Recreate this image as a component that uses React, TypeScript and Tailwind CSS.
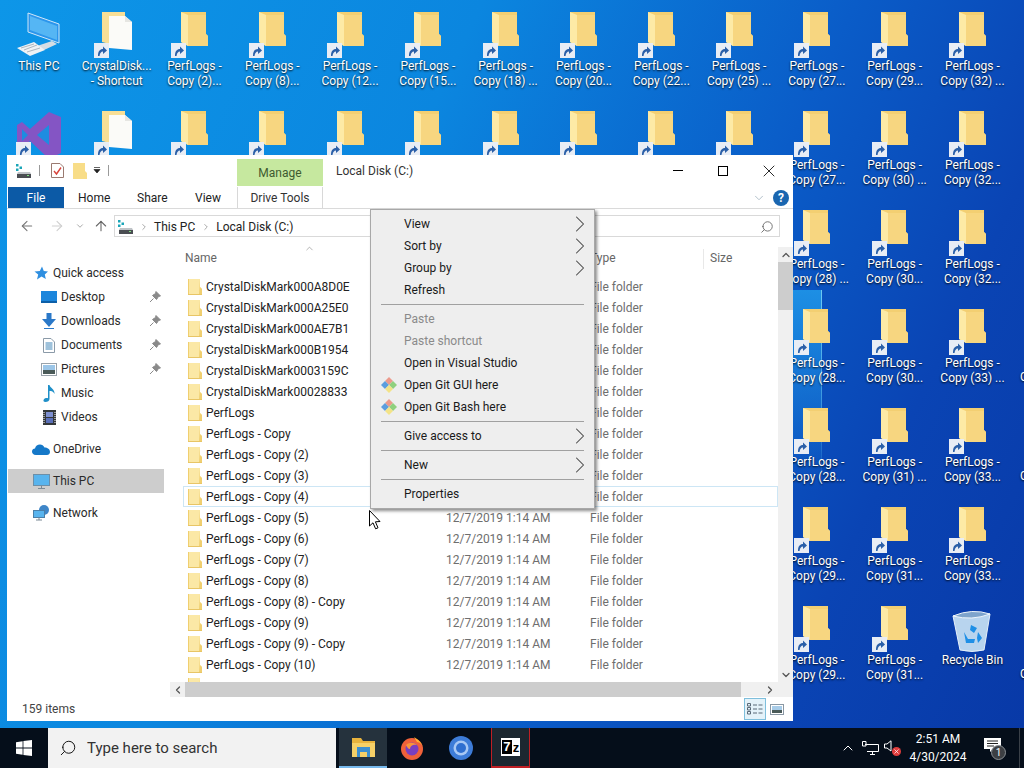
import { ChevronRight, ChevronLeft, ChevronUp, ChevronDown, ArrowLeft, ArrowRight, ArrowUp, Search, X } from "lucide-react";

const FONT = "font-['Roboto',sans-serif]";

function ShortcutBadge() {
  return (
    <svg width="15" height="15" viewBox="0 0 15 15" className="absolute left-0 bottom-0">
      <rect x="0" y="0" width="15" height="15" fill="#e8edf5" />
      <path d="M4 13 C4 8 6 6 9 6 L9 3.5 L13 7.5 L9 11 L9 8.5 C7 8.5 6 10 5.5 13 Z" fill="#2a5fa8" />
    </svg>
  );
}

function BigFolder() {
  return (
    <svg width="29" height="36" viewBox="0 0 29 36">
      <path d="M1 0 H26 V22 L28 24 V34 H8 L1 30 Z" fill="#f3cf72" />
      <path d="M1 0 L8 3 V34 L1 30 Z" fill="#fdeaa6" />
      <path d="M8 3 H26 V22 L28 24 V34 H8 Z" fill="#f7d680" />
    </svg>
  );
}

function DocFolder() {
  return (
    <svg width="32" height="40" viewBox="0 0 32 40">
      <path d="M1 0 H24 V36 L1 30 Z" fill="#f8df96" />
      <path d="M8 4 H24 L31 10 V38 L8 36 Z" fill="#fbfbf8" />
      <path d="M24 4 V10 H31 Z" fill="#e6e6e2" />
    </svg>
  );
}

function ThisPc() {
  return (
    <svg width="46" height="44" viewBox="0 0 46 44">
      <path d="M12 1 L43 12 V31 L12 20 Z" fill="#2c96ec" stroke="#cfe6f8" strokeWidth="1" />
      <path d="M14 4 L41 14 V28 L14 18 Z" fill="#55b6f4" />
      <path d="M21 34 L36 29 L41 32 L28 38 Z" fill="#d5dde4" />
      <path d="M1 36 L18 30 L29 38 L14 44 Z" fill="#eef2f5" />
      <path d="M5 36 L18 32 M8 38 L21 33 M11 40 L24 36" stroke="#aab6c0" strokeWidth="1" />
    </svg>
  );
}

function VsLogo() {
  return (
    <svg width="46" height="48" viewBox="0 0 46 48">
      <path d="M33 1 L45 6 V42 L33 48 L14 30 L6 37 L1 34 V14 L6 11 L14 18 Z" fill="#8455c4" />
      <path d="M33 14 L21 24 L33 34 Z M6 18 V30 L12 24 Z" fill="#1e8ce0" />
    </svg>
  );
}

function RecycleBin() {
  return (
    <svg width="40" height="44" viewBox="0 0 40 44">
      <path d="M1 8 L38 6 L32 42 Q20 45 8 42 Z" fill="#b8d4ee" stroke="#e6f0fa" strokeWidth="1" />
      <path d="M1 8 Q20 0 38 6 Q20 13 1 8 Z" fill="#7ea4cc" stroke="#eef5fb" strokeWidth="1" />
      <path d="M19 17 L25 20 L22 25 L18 22 Z M12 24 L16 31 L23 31 L22 35 L14 35 Z M26 24 L30 30 L26 35 L25 30 Z" fill="#1f8fe6" />
    </svg>
  );
}

type Cell = { icon: "folder" | "doc" | "pc" | "vs" | "bin"; lines: string[]; shortcut?: boolean } | null;

function f(second?: string): Cell {
  return { icon: "folder", lines: second ? ["PerfLogs -", second] : [], shortcut: true };
}

const hiddenCols: Cell[] = new Array(10).fill(null);

const desktop: Cell[] = [
  { icon: "pc", lines: ["This PC"] },
  { icon: "doc", lines: ["CrystalDisk...", "- Shortcut"], shortcut: true },
  f("Copy (2)..."), f("Copy (8)..."), f("Copy (12..."), f("Copy (15..."), f("Copy (18) ..."),
  f("Copy (20..."), f("Copy (22..."), f("Copy (25) ..."), f("Copy (27..."), f("Copy (29..."), f("Copy (32) ..."),
  { icon: "vs", lines: [], shortcut: true },
  { icon: "doc", lines: [], shortcut: true },
  f(), f(), f(), f(), f(), f(), f(), f(),
  f("Copy (27..."), f("Copy (30) ..."), f("Copy (32..."),
  ...hiddenCols, f("Copy (28) ..."), f("Copy (30..."), f("Copy (32..."),
  ...hiddenCols, f("Copy (28..."), f("Copy (30..."), f("Copy (33) ..."),
  ...hiddenCols, f("Copy (28..."), f("Copy (31) ..."), f("Copy (33..."),
  ...hiddenCols, f("Copy (29..."), f("Copy (31..."), f("Copy (33..."),
  ...hiddenCols, f("Copy (29..."), f("Copy (31..."),
  { icon: "bin", lines: ["Recycle Bin"] },
];

function DesktopIcon({ cell }: { cell: Cell }) {
  if (!cell) return <div />;
  return (
    <div className="flex flex-col items-center">
      <div className="relative flex h-[49px] w-[46px] items-start justify-center pt-[2px]">
        {cell.icon === "folder" && <BigFolder />}
        {cell.icon === "doc" && <DocFolder />}
        {cell.icon === "pc" && <ThisPc />}
        {cell.icon === "vs" && <VsLogo />}
        {cell.icon === "bin" && <div className="mt-[2px]"><RecycleBin /></div>}
        {cell.shortcut && <div className="absolute bottom-px left-0 h-[15px] w-[15px]"><ShortcutBadge /></div>}
      </div>
      <div className="w-[76px] text-center text-[12px] leading-[15px] text-white [text-shadow:0_1px_2px_rgba(0,0,0,0.95)] whitespace-nowrap">
        {cell.lines.map((l) => (
          <div key={l}>{l}</div>
        ))}
      </div>
    </div>
  );
}

function DriveIcon() {
  return (
    <svg width="16" height="14" viewBox="0 0 16 14">
      <rect x="0" y="0" width="2.5" height="2.5" fill="#1aa5b8" />
      <rect x="3.5" y="2.5" width="2.5" height="2.5" fill="#1aa5b8" />
      <rect x="0" y="4.5" width="2.5" height="2.5" fill="#1aa5b8" />
      <path d="M2 8 H14 L15 10 H1 Z" fill="#bfc3c7" />
      <rect x="1" y="10" width="14" height="4" fill="#4a4d52" />
      <rect x="11" y="11" width="2" height="1" fill="#7de07d" />
    </svg>
  );
}

function SmallFolder() {
  return (
    <svg width="14" height="16" viewBox="0 0 14 16" className="shrink-0">
      <path d="M0 0 H12 V8 L14 10 V16 H0 Z" fill="#fbe8a6" />
      <path d="M0 0 H1 V16 H0 Z M12 0 V8 L14 10 V16 H11 Z" fill="#f0cf70" />
      <path d="M0 15 H14 V16 H0 Z" fill="#e8c565" />
    </svg>
  );
}

function Pin() {
  return (
    <svg width="12" height="12" viewBox="0 0 12 12" className="absolute right-[3px]">
      <path d="M7 0.5 L11.5 5 L9.5 5.5 L7.5 8.5 L3.5 4.5 L6.5 2.5 Z M4.5 7.5 L1 11" fill="#8a8a8a" stroke="#8a8a8a" strokeWidth="1" />
    </svg>
  );
}

const navIcons: Record<string, React.ReactNode> = {
  quick: (
    <svg width="14" height="14" viewBox="0 0 14 14">
      <path d="M8 0.5 L9.8 5 L14 5.4 L10.8 8.4 L11.8 13 L7.5 10.6 L3 13.5 L4.2 8.5 L0.5 5.4 L5.8 5 Z" fill="#2f8fe0" />
    </svg>
  ),
  desktop: (
    <svg width="16" height="12" viewBox="0 0 16 12">
      <rect width="16" height="12" fill="#1c86dc" />
      <rect x="0" y="10" width="16" height="2" fill="#0c5fa8" />
    </svg>
  ),
  downloads: (
    <svg width="16" height="16" viewBox="0 0 16 16">
      <path d="M5.5 0 H10.5 V6 H15 L8 14 L1 6 H5.5 Z" fill="#2a78c8" />
      <path d="M3 15 H13 V16 H3 Z" fill="#2a78c8" />
    </svg>
  ),
  documents: (
    <svg width="12" height="15" viewBox="0 0 12 15">
      <path d="M0.5 0.5 H8 L11.5 4 V14.5 H0.5 Z" fill="#fff" stroke="#8b9aa8" />
      <path d="M2.5 5 H9.5 M2.5 7 H9.5 M2.5 9 H9.5 M2.5 11 H9.5" stroke="#3f85b8" />
    </svg>
  ),
  pictures: (
    <svg width="16" height="13" viewBox="0 0 16 13">
      <rect x="0.5" y="0.5" width="15" height="12" fill="#fff" stroke="#9aa3ab" />
      <rect x="2" y="2" width="12" height="5" fill="#9cc6e8" />
      <rect x="2" y="7" width="12" height="4" fill="#4a5a58" />
    </svg>
  ),
  music: (
    <svg width="13" height="17" viewBox="0 0 13 17">
      <path d="M5 0 H6.5 C7 3 12 4 11.5 9 C10.5 6.5 8.5 6 6.5 6 V14 C6.5 16 4.5 17 2.5 17 C0.5 17 0 15.5 0.8 14.4 C1.6 13.3 3.8 12.8 5 13.3 Z" fill="#1f8fc8" />
    </svg>
  ),
  videos: (
    <svg width="13" height="15" viewBox="0 0 13 15">
      <rect width="13" height="15" fill="#33373a" />
      <rect x="3" y="2" width="7" height="5" fill="#7d8fd0" />
      <rect x="3" y="8" width="7" height="5" fill="#5a6fb8" />
      <path d="M1 2 V13 M12 2 V13" stroke="#fff" strokeDasharray="1 1" />
    </svg>
  ),
  onedrive: (
    <svg width="18" height="11" viewBox="0 0 18 11">
      <path d="M4 11 C1 11 0 9 0 7.5 C0 5.5 1.5 4.5 3 4.5 C3.5 2 5.5 0.5 8 0.5 C10 0.5 11.5 1.5 12.5 3.5 C15.5 3.5 18 5 18 8 C18 10 16.5 11 15 11 Z" fill="#1578c8" />
    </svg>
  ),
  pc: (
    <svg width="17" height="15" viewBox="0 0 17 15">
      <rect x="0.5" y="0.5" width="16" height="11" fill="#58b4ee" stroke="#6d8fa8" />
      <path d="M5 14.5 H12 M8.5 11.5 V14.5" stroke="#7a8a96" />
    </svg>
  ),
  network: (
    <svg width="17" height="16" viewBox="0 0 17 16">
      <circle cx="11" cy="5" r="5" fill="#3f86c8" />
      <rect x="0.5" y="5.5" width="11" height="7" fill="#58b4ee" stroke="#4a7fa8" />
      <path d="M3 15 H9 M6 12.5 V15" stroke="#7a8a96" />
    </svg>
  ),
};

const navItems = [
  { key: "quick", label: "Quick access", x: "pl-[24px]", y: "mt-[18px]" },
  { key: "desktop", label: "Desktop", x: "pl-[32px]", pin: true },
  { key: "downloads", label: "Downloads", x: "pl-[32px]", pin: true },
  { key: "documents", label: "Documents", x: "pl-[32px]", pin: true },
  { key: "pictures", label: "Pictures", x: "pl-[32px]", pin: true },
  { key: "music", label: "Music", x: "pl-[32px]" },
  { key: "videos", label: "Videos", x: "pl-[32px]" },
  { key: "onedrive", label: "OneDrive", x: "pl-[24px]", y: "mt-[8px]" },
  { key: "pc", label: "This PC", x: "pl-[24px]", y: "mt-[8px]", active: true },
  { key: "network", label: "Network", x: "pl-[24px]", y: "mt-[8px]" },
];

const files = [
  "CrystalDiskMark000A8D0E",
  "CrystalDiskMark000A25E0",
  "CrystalDiskMark000AE7B1",
  "CrystalDiskMark000B1954",
  "CrystalDiskMark0003159C",
  "CrystalDiskMark00028833",
  "PerfLogs",
  "PerfLogs - Copy",
  "PerfLogs - Copy (2)",
  "PerfLogs - Copy (3)",
  "PerfLogs - Copy (4)",
  "PerfLogs - Copy (5)",
  "PerfLogs - Copy (6)",
  "PerfLogs - Copy (7)",
  "PerfLogs - Copy (8)",
  "PerfLogs - Copy (8) - Copy",
  "PerfLogs - Copy (9)",
  "PerfLogs - Copy (9) - Copy",
  "PerfLogs - Copy (10)",
];

function GitIcon() {
  return (
    <svg width="18" height="18" viewBox="0 0 18 18" className="absolute left-[9px]">
      <path d="M9 1 L13 5 L9 9 L5 5 Z" fill="#ec9a8c" />
      <path d="M1 9 L5 5 L9 9 L5 13 Z" fill="#5c9ede" />
      <path d="M9 9 L13 5 L17 9 L13 13 Z" fill="#8fd07e" />
      <path d="M5 13 L9 9 L13 13 L9 17 Z" fill="#f3e388" />
    </svg>
  );
}

type MenuEntry =
  | { sep: true }
  | { label: string; arrow?: boolean; disabled?: boolean; git?: boolean };

const menu: MenuEntry[] = [
  { label: "View", arrow: true },
  { label: "Sort by", arrow: true },
  { label: "Group by", arrow: true },
  { label: "Refresh" },
  { sep: true },
  { label: "Paste", disabled: true },
  { label: "Paste shortcut", disabled: true },
  { label: "Open in Visual Studio" },
  { label: "Open Git GUI here", git: true },
  { label: "Open Git Bash here", git: true },
  { sep: true },
  { label: "Give access to", arrow: true },
  { sep: true },
  { label: "New", arrow: true },
  { sep: true },
  { label: "Properties" },
];

function ContextMenu() {
  return (
    <div className="absolute left-[370px] top-[209px] z-20 flex w-[225px] flex-col border border-[#a8a8a8] bg-[#eeeeee] py-[3px] shadow-[2px_2px_3px_rgba(0,0,0,0.45)]">
      {menu.map((m, i) =>
        "sep" in m ? (
          <div key={i} className="flex h-[7px] items-center pl-[10px] pr-[10px]">
            <div className="h-px w-full bg-[#a0a0a0]" />
          </div>
        ) : (
          <div key={m.label} className="relative flex h-[22px] items-center pl-[33px] text-[12px]">
            {m.git && <GitIcon />}
            <span className={m.disabled ? "text-[#8a8a8a]" : "text-[#1a1a1a]"}>{m.label}</span>
            {m.arrow && <ChevronRight size={28} strokeWidth={0.9} className="absolute right-0 text-[#444]" />}
          </div>
        )
      )}
    </div>
  );
}

function Explorer() {
  return (
    <div className="absolute left-[7px] top-[155px] z-10 flex h-[566px] w-[786px] flex-col bg-white text-[12px] text-[#222]">
      {/* title bar and Manage tab */}
      <div className="flex h-[31px] shrink-0 pl-[9px]">
        <div className="flex w-[221px] items-center">
          <DriveIcon />
          <div className="ml-[7px] h-[11px] w-px bg-[#9a9a9a]" />
          <svg width="13" height="15" viewBox="0 0 13 15" className="ml-[11px]">
            <path d="M0.5 0.5 H9 L12.5 4 V14.5 H0.5 Z" fill="#fff" stroke="#9a7a70" />
            <path d="M3 8 L5.5 11 L10 4.5" stroke="#d8433a" strokeWidth="1.4" fill="none" />
          </svg>
          <svg width="14" height="16" viewBox="0 0 14 16" className="ml-[9px]">
            <path d="M0 0 H12 V8 L14 10 V16 H0 Z" fill="#f8dd88" />
          </svg>
          <svg width="8" height="7" viewBox="0 0 8 7" className="ml-[6px]">
            <path d="M1 0.5 H7 M1 2.5 H7 L4 6 Z" fill="#222" stroke="#222" strokeWidth="0.7" />
          </svg>
          <div className="ml-[7px] h-[11px] w-px bg-[#9a9a9a]" />
        </div>
        <div className="mt-[4px] flex h-[27px] w-[86px] items-center justify-center bg-[#c6e89f] text-[#3f5b30]">Manage</div>
        <div className="ml-[13px] flex items-center pt-px text-[#333]">Local Disk (C:)</div>
        <div className="ml-auto flex items-center">
          <div className="mr-[35px] h-px w-[10px] bg-black" />
          <div className="mr-[31px] h-[10px] w-[10px] border border-black" />
          <X size={20} strokeWidth={1} className="mr-[14px] text-black" />
        </div>
      </div>
      {/* ribbon tabs */}
      <div className="flex h-[23px] shrink-0 items-stretch border-b border-[#dadada] pl-px pt-px">
        <div className="flex w-[56px] items-center justify-center bg-[#0c5aa6] text-white">File</div>
        <div className="ml-[14px] flex w-[59px] items-center">Home</div>
        <div className="flex w-[58px] items-center">Share</div>
        <div className="flex w-[42px] items-center">View</div>
        <div className="flex w-[86px] items-center justify-center border-x border-[#d8d8d8] text-[#333]">Drive Tools</div>
        <div className="ml-auto flex items-center pr-[4px]">
          <ChevronDown size={14} strokeWidth={1.5} className="mr-[7px] text-[#a8b8c4]" />
          <div className="flex h-[16px] w-[16px] items-center justify-center rounded-full bg-[#1a66b0] text-[12px] font-bold leading-none text-white">?</div>
        </div>
      </div>
      {/* address row */}
      <div className="flex h-[34px] shrink-0 items-center pl-[12px] pr-[13px]">
        <ArrowLeft size={16} strokeWidth={1.6} className="text-[#777]" />
        <ArrowRight size={16} strokeWidth={1.6} className="ml-[14px] text-[#cfcfcf]" />
        <ChevronDown size={10} strokeWidth={2} className="ml-[10px] text-[#999]" />
        <ArrowUp size={16} strokeWidth={1.6} className="ml-[8px] text-[#666]" />
        <div className="ml-[5px] flex h-[22px] flex-1 items-center border border-[#d9d9d9] pl-[3px] pr-[5px] pt-px">
          <DriveIcon />
          <ChevronRight size={10} strokeWidth={1.5} className="ml-[5px] text-[#777]" />
          <span className="ml-[5px]">This PC</span>
          <ChevronRight size={10} strokeWidth={1.5} className="ml-[6px] text-[#777]" />
          <span className="ml-[5px]">Local Disk (C:)</span>
          <Search size={14} strokeWidth={1.5} className="ml-auto -scale-x-100 text-[#666]" />
        </div>
      </div>
      {/* body */}
      <div className="flex min-h-0 flex-1">
        <div className="w-[163px] shrink-0 pl-px">
          {navItems.map((n) => (
            <div
              key={n.key}
              className={`relative flex h-[24px] w-[156px] items-center ${n.x} ${n.y ?? ""} ${n.active ? "bg-[#cdcdcd]" : ""}`}
            >
              <span className="flex w-[18px] shrink-0 justify-center">{navIcons[n.key]}</span>
              <span className="ml-[3px] text-[#2a2a2a]">{n.label}</span>
              {n.pin && <Pin />}
            </div>
          ))}
        </div>
        <div className="flex min-w-0 flex-1 flex-col">
          <div className="flex min-h-0 flex-1">
            <div className="min-w-0 flex-1 overflow-hidden">
              <div className="relative flex h-[33px] items-start pt-[6px] text-[#666]">
                <ChevronUp size={11} strokeWidth={1.2} className="absolute left-[134px] top-0 text-[#777]" />
                <span className="ml-[15px] w-[405px]">Name</span>
                <span className="w-[113px]">Type</span>
                <span className="h-[20px] w-px bg-[#e8e8e8]" />
                <span className="ml-[6px]">Size</span>
              </div>
              {files.map((name) => (
                <div
                  key={name}
                  className={`relative ml-[13px] flex h-[21px] items-center pl-[5px] ${
                    name === "PerfLogs - Copy (4)" ? "outline outline-1 -outline-offset-1 outline-[#cde6f5]" : ""
                  }`}
                >
                  <SmallFolder />
                  <span className="ml-[4px] w-[240px] shrink-0 text-[#222]">{name}</span>
                  <span className="w-[144px] shrink-0 text-[#6e6e6e]">12/7/2019 1:14 AM</span>
                  <span className="text-[#6e6e6e]">File folder</span>
                </div>
              ))}
              <div className="ml-[18px] flex h-[21px] items-center">
                <SmallFolder />
              </div>
            </div>
            <div className="mt-[4px] flex w-[15px] shrink-0 flex-col bg-[#f0f0f0]">
              <div className="flex h-[15px] items-center justify-center">
                <ChevronUp size={12} strokeWidth={2.5} className="text-[#555]" />
              </div>
              <div className="h-[48px] bg-[#cdcdcd]" />
              <div className="flex-1" />
              <div className="flex h-[15px] items-center justify-center">
                <ChevronDown size={12} strokeWidth={2.5} className="text-[#555]" />
              </div>
            </div>
          </div>
          <div className="flex h-[15px] shrink-0 items-stretch bg-[#f0f0f0] pr-[15px]">
            <div className="flex w-[15px] items-center justify-center">
              <ChevronLeft size={12} strokeWidth={2.5} className="text-[#555]" />
            </div>
            <div className="w-[556px] bg-[#cdcdcd]" />
            <div className="flex flex-1 items-center justify-end pr-[2px]">
              <ChevronRight size={12} strokeWidth={2.5} className="text-[#555]" />
            </div>
          </div>
        </div>
      </div>
      {/* status bar */}
      <div className="flex h-[24px] shrink-0 items-center pl-[15px] text-[#444]">
        <span>159 items</span>
        <div className="ml-auto mr-[9px] flex items-center">
          <div className="flex h-[22px] w-[22px] items-center justify-center border border-[#7fbfdc] bg-[#e4f2f9]">
            <svg width="16" height="12" viewBox="0 0 16 12">
              <path d="M0.5 0.5 H3.5 V3 H0.5 Z M0.5 4.5 H3.5 V7 H0.5 Z M0.5 8.5 H3.5 V11 H0.5 Z" fill="none" stroke="#5a6a78" />
              <path d="M6 2 H10 M11.5 2 H15.5 M6 6 H10 M11.5 6 H15.5 M6 10 H10 M11.5 10 H15.5" stroke="#5a6a78" />
            </svg>
          </div>
          <svg width="14" height="11" viewBox="0 0 14 11" className="ml-[4px]">
            <rect x="0.5" y="0.5" width="13" height="10" fill="#fff" stroke="#8a98a4" />
            <rect x="2" y="2" width="10" height="4" fill="#a8cce8" />
            <rect x="2" y="6" width="10" height="3" fill="#4a5a58" />
          </svg>
        </div>
      </div>
    </div>
  );
}

function Taskbar() {
  return (
    <div className="absolute inset-x-0 bottom-0 z-30 flex h-[40px] items-stretch bg-[#050e1a] text-white">
      <div className="flex w-[48px] shrink-0 items-center justify-center">
        <svg width="16" height="16" viewBox="0 0 16 16">
          <path d="M0 2.2 L6.6 1.2 V7.6 H0 Z M7.4 1.1 L16 0 V7.6 H7.4 Z M0 8.4 H6.6 V14.8 L0 13.8 Z M7.4 8.4 H16 V16 L7.4 14.9 Z" fill="#fff" />
        </svg>
      </div>
      <div className="flex w-[288px] shrink-0 items-center bg-[#f2f2f2] pl-[11px] text-[#333]">
        <Search size={18} strokeWidth={1.3} className="-scale-x-100 text-[#111]" />
        <span className="ml-[10px] text-[15px]">Type here to search</span>
      </div>
      <div className="ml-[3px] flex w-[48px] shrink-0 items-center justify-center border-b-[2px] border-[#76b9ed] bg-[#25323d]">
        <svg width="23" height="19" viewBox="0 0 23 19">
          <path d="M0 0 H9 L11 3 H23 V19 H0 Z" fill="#e8b33d" />
          <rect x="0" y="5" width="23" height="14" fill="#f6d067" />
          <rect x="5" y="9" width="13" height="10" fill="#3d8fd0" />
          <rect x="8" y="14" width="7" height="5" fill="#f6d067" />
        </svg>
      </div>
      <div className="flex w-[49px] shrink-0 items-center justify-center">
        <svg width="24" height="24" viewBox="0 0 24 24">
          <circle cx="12" cy="13" r="11" fill="#f0613a" />
          <path d="M14 1 C19 4 23 8 23 13 C23 9 20 6 17 6 Z" fill="#ffb52e" />
          <circle cx="12" cy="13" r="6.5" fill="#7a3fc0" />
          <path d="M6 9 C9 6 14 6 17 9 C13 8 10 10 10 13 C8 13 7 11 6 9 Z" fill="#f8943a" />
        </svg>
      </div>
      <div className="flex w-[49px] shrink-0 items-center justify-center">
        <svg width="24" height="24" viewBox="0 0 24 24">
          <circle cx="12" cy="12" r="12" fill="#3d7cd8" />
          <circle cx="12" cy="12" r="7.5" fill="#a8c8f4" />
          <circle cx="12" cy="12" r="5" fill="#2f6fd0" />
        </svg>
      </div>
      <div className="ml-[6px] flex w-[39px] shrink-0 items-center justify-center border-x-[1px] border-b-[2px] border-[#c01f24] bg-[#1c2730]">
        <div className="flex h-[18px] items-center bg-white px-px">
          <span className="flex h-[14px] w-[10px] items-center justify-center bg-black font-['Liberation_Sans',sans-serif] text-[13px] font-bold text-white">7</span>
          <span className="ml-px font-['Liberation_Sans',sans-serif] text-[13px] font-bold leading-none text-black">z</span>
        </div>
      </div>
      <div className="ml-auto flex items-center pr-[4px]">
        <ChevronUp size={16} strokeWidth={1.5} className="mr-[6px]" />
        <svg width="17" height="14" viewBox="0 0 17 14" className="mr-[5px]">
          <path d="M3 3.5 H16.5 V10.5 H5 M0.5 0.5 H4 V5 H0.5 Z M8 13.5 H13 M10.5 10.5 V13.5" fill="none" stroke="#fff" />
        </svg>
        <span className="relative mr-[6px] h-[16px] w-[17px]">
          <svg width="10" height="12" viewBox="0 0 10 12" className="absolute left-0 top-0">
            <path d="M0.5 4 H3 L7 0.8 V11 L3 8 H0.5 Z" fill="none" stroke="#fff" />
          </svg>
          <span className="absolute bottom-0 right-0 flex h-[9px] w-[9px] items-center justify-center rounded-full bg-[#e03c3c]">
            <X size={7} strokeWidth={2.5} />
          </span>
        </span>
        <div className="flex w-[62px] flex-col items-center text-[12px] leading-[18px]">
          <span>2:51 AM</span>
          <span>4/30/2024</span>
        </div>
        <div className="relative ml-[15px] mr-[11px] h-[24px] w-[24px]">
          <svg width="17" height="15" viewBox="0 0 17 15" className="absolute left-0 top-[2px]">
            <path d="M0 0 H17 V11 H9 L6 14 V11 H0 Z" fill="#fff" />
            <path d="M3 3 H14 M3 5.5 H14 M3 8 H10" stroke="#222" />
          </svg>
          <span className="absolute bottom-0 right-[2px] flex h-[15px] w-[15px] items-center justify-center rounded-full border border-[#8a8f94] bg-[#3c3f43] text-[10px] leading-none">1</span>
        </div>
        <div className="h-full w-px bg-[#3a4048]" />
      </div>
    </div>
  );
}

function Cursor() {
  return (
    <svg width="14" height="20" viewBox="0 0 14 20" className="absolute left-[369px] top-[510px] z-40">
      <path d="M0.5 0.5 V16 L4 12.8 L6.6 18.8 L9 17.8 L6.4 11.8 L11 11.5 Z" fill="#fff" stroke="#000" />
    </svg>
  );
}

export default function App() {
  return (
    <div
      className={`relative h-[768px] w-[1024px] overflow-hidden ${FONT} bg-[linear-gradient(115deg,#0d96e8_0%,#0b86df_35%,#0a5cc8_62%,#0a44b4_80%,#0838a6_100%)]`}
    >
      {/* wallpaper light pane behind the icons */}
      <div className="absolute left-[793px] top-[290px] h-[200px] w-[29px] bg-[linear-gradient(180deg,#1d8fe4,#1d8fe400)]" />
      <div className="absolute left-[821px] top-[290px] h-[200px] w-px bg-[linear-gradient(180deg,#6cc8f2,#6cc8f200)]" />
      <div className="absolute inset-x-0 top-0 grid auto-rows-[99px] grid-cols-[repeat(13,77.8px)] pt-[10px]">
        {desktop.map((c, i) => (
          <DesktopIcon key={i} cell={c} />
        ))}
      </div>
      {/* labels of the next icon column, cut by the screen edge */}
      <span className="absolute left-[1020px] top-[370px] text-[12px] leading-[15px] text-white [text-shadow:0_1px_2px_rgba(0,0,0,0.95)]">Copy</span>
      <span className="absolute left-[1020px] top-[469px] text-[12px] leading-[15px] text-white [text-shadow:0_1px_2px_rgba(0,0,0,0.95)]">Copy</span>
      <span className="absolute left-[1020px] top-[667px] text-[12px] leading-[15px] text-white [text-shadow:0_1px_2px_rgba(0,0,0,0.95)]">Copy</span>
      <Explorer />
      <ContextMenu />
      <Cursor />
      <Taskbar />
    </div>
  );
}
